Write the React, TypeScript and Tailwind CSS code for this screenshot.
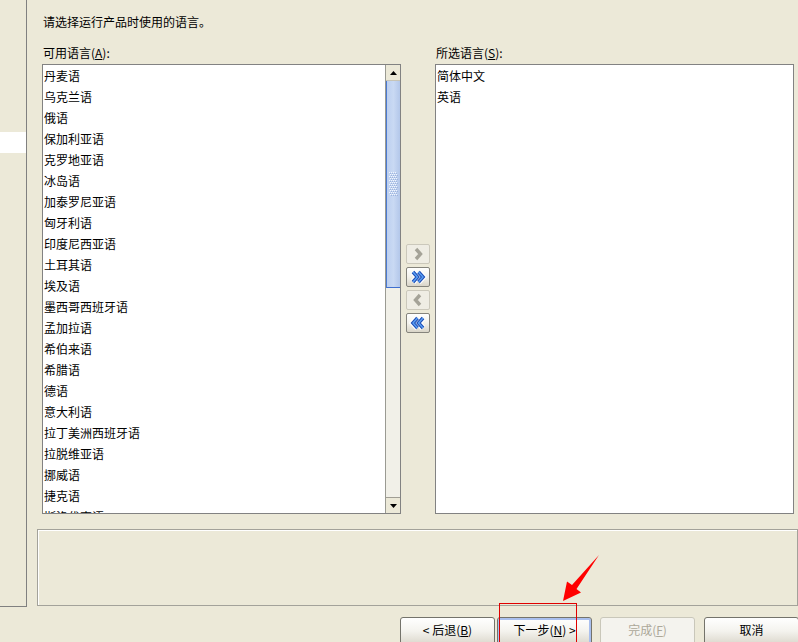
import React from "react";

const items = [
  "丹麦语",
  "乌克兰语",
  "俄语",
  "保加利亚语",
  "克罗地亚语",
  "冰岛语",
  "加泰罗尼亚语",
  "匈牙利语",
  "印度尼西亚语",
  "土耳其语",
  "埃及语",
  "墨西哥西班牙语",
  "孟加拉语",
  "希伯来语",
  "希腊语",
  "德语",
  "意大利语",
  "拉丁美洲西班牙语",
  "拉脱维亚语",
  "挪威语",
  "捷克语",
  "斯洛伐克语",
];

function Chevron({ left, double, enabled }: { left?: boolean; double?: boolean; enabled?: boolean }) {
  const pts = double
    ? ["6,4 10.5,9 6,14", "11.5,4 16,9 11.5,14"]
    : ["9,4 13.5,9 9,14"];
  return (
    <svg width="22" height="18" viewBox="0 0 22 18" className={left ? "-scale-x-100" : ""}>
      {enabled ? (
        <>
          {pts.map((p, i) => (
            <polyline key={"w" + i} points={p} fill="none" stroke="#ffffff" strokeWidth="6" strokeLinejoin="miter" />
          ))}
          {pts.map((p, i) => (
            <polyline key={"d" + i} points={p} fill="none" stroke="#1f4fb5" strokeWidth="3.6" strokeLinejoin="miter" />
          ))}
          {pts.map((p, i) => (
            <polyline key={"l" + i} points={p} fill="none" stroke="#5aa0f5" strokeWidth="1.4" strokeLinejoin="miter" />
          ))}
        </>
      ) : (
        pts.map((p, i) => (
          <polyline key={i} points={p} fill="none" stroke="#a5a398" strokeWidth="3.4" strokeLinejoin="miter" />
        ))
      )}
    </svg>
  );
}

function MoveBtn({ left, double, enabled }: { left?: boolean; double?: boolean; enabled?: boolean }) {
  return (
    <div
      className={
        "w-[24px] h-[20px] rounded-[2px] flex items-center justify-center " +
        (enabled
          ? "border border-[#85847c] bg-gradient-to-b from-[#ffffff] via-[#f3f2ec] to-[#d9d5c8]"
          : "border border-[#cbc8bb] bg-[#efede4]")
      }
    >
      <Chevron left={left} double={double} enabled={enabled} />
    </div>
  );
}

function Triangle({ down }: { down?: boolean }) {
  return (
    <svg width="7" height="4" viewBox="0 0 7 4">
      <polygon points={down ? "0,0 7,0 3.5,4" : "0,4 7,4 3.5,0"} fill="#000000" />
    </svg>
  );
}

function Grip() {
  const dots: React.ReactNode[] = [];
  for (let r = 0; r < 12; r++) {
    for (let c = 0; c < 4; c++) {
      const x = c * 2 + (r % 2);
      const y = r * 2;
      dots.push(<rect key={`a${r}-${c}`} x={x} y={y} width="1" height="1" fill="#f2f6fd" />);
      dots.push(<rect key={`b${r}-${c}`} x={x + 1} y={y + 1} width="1" height="1" fill="#9db4dd" />);
    }
  }
  return (
    <svg width="9" height="24" viewBox="0 0 9 24">
      {dots}
    </svg>
  );
}

function WizBtn({
  children,
  disabled,
  focused,
  className,
}: {
  children: React.ReactNode;
  disabled?: boolean;
  focused?: boolean;
  className?: string;
}) {
  return (
    <div
      className={
        "w-[95px] h-[28px] shrink-0 rounded-t-[3px] flex items-start justify-center pt-[5px] " +
        (disabled
          ? "border border-[#c9c7ba] bg-[#f4f3ee] text-[#aca899] "
          : "border border-[#74736b] bg-gradient-to-b from-[#ffffff] via-[#f4f3ee] to-[#dcd8cd] text-black ") +
        (focused ? "shadow-[inset_0_0_0_2px_#a9bfee] " : "") +
        (className ?? "")
      }
    >
      {children}
    </div>
  );
}

export default function App() {
  return (
    <div className="relative w-[798px] h-[642px] overflow-hidden bg-[#ECE9D8] font-['Noto_Sans_CJK_SC',sans-serif] text-[12px] leading-[14px] text-black">
      <div className="flex h-[607px]">
        {/* left navigation strip */}
        <div className="w-[27px] h-[607px] shrink-0 border-r border-b border-[#808080] pt-[132px]">
          <div className="h-[21px] bg-white" />
        </div>

        {/* main content */}
        <div className="flex-1 flex flex-col">
          <div className="h-[44px] pt-[15px] pl-[16px]">请选择运行产品时使用的语言。</div>

          <div className="h-[20px] pt-[2px] pl-[16px] flex">
            <div className="w-[393px]">
              可用语言(<span className="underline">A</span>):
            </div>
            <div>
              所选语言(<span className="underline">S</span>):
            </div>
          </div>

          <div className="h-[450px] pl-[15px] flex">
            {/* available list */}
            <div className="w-[359px] h-[450px] border border-[#828282] bg-white flex">
              <div className="flex-1 overflow-hidden">
                {items.map((it) => (
                  <div key={it} className="h-[21px] flex items-center pl-[1px] whitespace-nowrap">
                    {it}
                  </div>
                ))}
              </div>
              {/* scrollbar */}
              <div className="w-[15px] h-[448px] flex flex-col border-l border-[#9a9a92] bg-[#f1efe6]">
                <div className="h-[16px] flex items-center justify-center bg-[#ECE9D8] border-b border-[#c7c4b6]">
                  <Triangle />
                </div>
                <div className="h-[207px] flex items-center justify-center border-l border-[#4c7ad0] border-b border-b-[#3f6fcf] bg-gradient-to-r from-[#bdd0f0] via-[#c9d9f3] to-[#b3c7ea]">
                  <Grip />
                </div>
                <div className="flex-1 bg-[#f1f0e8]" />
                <div className="h-[16px] flex items-center justify-center bg-[#ECE9D8] border-t border-[#a09e94]">
                  <Triangle down />
                </div>
              </div>
            </div>

            {/* move buttons */}
            <div className="w-[34px] pl-[5px] pt-[180px] flex flex-col gap-[3px]">
              <MoveBtn />
              <MoveBtn double enabled />
              <MoveBtn left />
              <MoveBtn left double enabled />
            </div>

            {/* selected list */}
            <div className="w-[359px] h-[450px] border border-[#828282] bg-white">
              <div className="h-[21px] flex items-center pl-[1px]">简体中文</div>
              <div className="h-[21px] flex items-center pl-[1px]">英语</div>
            </div>
          </div>

          <div className="h-[15px]" />

          <div className="pl-[10px]">
            <div className="w-[761px] h-[77px] border border-[#a3a29a] shadow-[inset_1px_1px_0_#ffffff]" />
          </div>
        </div>
      </div>

      {/* wizard buttons */}
      <div className="h-[35px] pt-[10px] pl-[400px] flex">
        <WizBtn>
          &lt; 后退(<span className="underline">B</span>)
        </WizBtn>
        <WizBtn focused className="ml-[2px]">
          下一步(<span className="underline">N</span>) &gt;
        </WizBtn>
        <WizBtn disabled className="ml-[8px]">
          完成(<span className="underline">F</span>)
        </WizBtn>
        <WizBtn className="ml-[9px]">取消</WizBtn>
      </div>

      {/* red annotation */}
      <div className="absolute left-[499px] top-[603px] w-[78px] h-[50px] border border-[#e00000] pointer-events-none" />
      <svg className="absolute left-0 top-0 pointer-events-none" width="798" height="642" viewBox="0 0 798 642">
        <polygon
          points="599,555 576.5,589 581,592.5 563,601 567,581.5 572,585"
          fill="#ff0000"
        />
      </svg>
    </div>
  );
}
